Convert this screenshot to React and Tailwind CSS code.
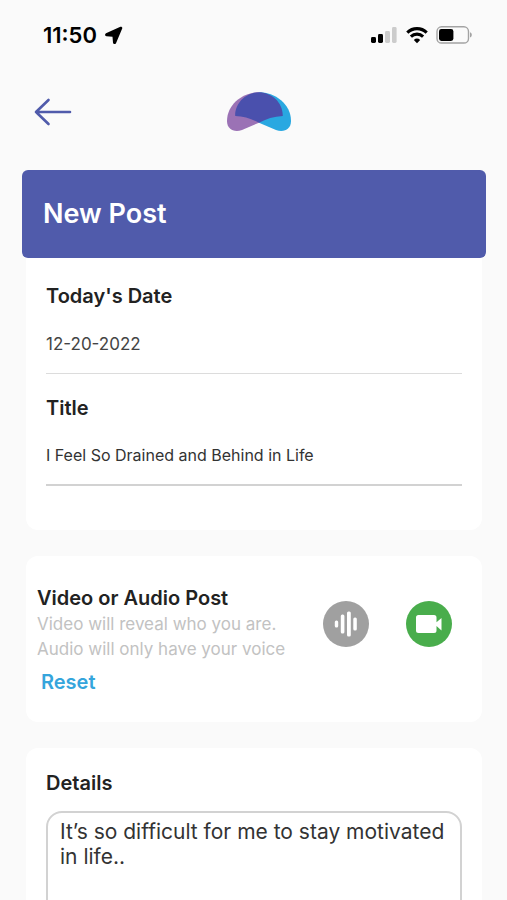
import { useState } from 'react';

const StatusBar = () => (
  <div className="flex h-[70px] items-center justify-between pl-[43px] pr-[34px] text-black">
    <div className="flex items-center gap-2">
      <span className="text-[22px] leading-7 font-semibold">11:50</span>
      <svg className="h-[18px] w-[18px]" viewBox="0 0 18 18" fill="currentColor" aria-hidden="true">
        <path d="M15.400.800 1 7.300c-1.400.7-1.200 2.900.5 3l6 .4.5 6c.1 1.600 2.300 1.900 3 .5L17.200 2.600c.5-1.200-.6-2.300-1.800-1.800z" />
      </svg>
    </div>
    <div className="flex items-center gap-2">
      <svg className="h-[18px] w-[27px]" viewBox="0 0 27 18" aria-hidden="true">
        <rect x="0" y="11" width="5" height="6" rx="1.4" fill="#000" />
        <rect x="7" y="8" width="5" height="9" rx="1.4" fill="#000" />
        <rect x="14" y="5" width="5" height="12" rx="1.4" fill="#ccc" />
        <rect x="21" y="1" width="4.6" height="16" rx="1.4" fill="#ccc" />
      </svg>
      <svg className="h-[18px] w-[22px]" viewBox="0 0 22 18" fill="none" stroke="#000" strokeWidth="3.1" aria-hidden="true">
        <path d="M1.3 6.6a13.8 13.8 0 0 1 19.4 0" />
        <path d="M4.9 10.6a8.8 8.8 0 0 1 12.2 0" />
        <path d="M11 17.2 7.8 13.9a4.7 4.7 0 0 1 6.4 0z" fill="#000" stroke="none" />
      </svg>
      <svg className="h-[18px] w-[37px]" viewBox="0 0 37 18" aria-hidden="true">
        <rect x="1" y=".8" width="31.5" height="16.2" rx="4.6" fill="none" stroke="#a3a3a3" strokeWidth="1.4" />
        <rect x="3" y="3" width="14.4" height="12" rx="2.4" fill="#000" />
        <path d="M34 6.3c2.4.8 2.4 4.4 0 5.2z" fill="#a3a3a3" />
      </svg>
    </div>
  </div>
);

const Logo = () => (
  <svg className="h-10 w-16" viewBox="0 0 64 40" role="img" aria-label="Logo">
    <path d="M32 .3C16 .3 0 12 0 29C0 37 7 41 15 38L32 30.700Z" fill="#9b72b5" />
    <path d="M32 .3C48 .3 64 12 64 29C64 37 57 41 49 38L32 30.700Z" fill="#29a8e1" />
    <path d="M32 .3C44 .3 56 10 55.800 24C47 24.300 39 27 32 30.700C25 27 17 24.300 8.200 24C8 10 20 .3 32 .3Z" fill="#4a50ad" />
  </svg>
);

const TopBar = () => (
  <header className="grid h-[100px] grid-cols-3 items-center px-[26px]">
    <button type="button" aria-label="Back" className="flex h-10 w-12 items-center justify-self-start pl-2 -mt-4">
      <svg className="h-7 w-[38px]" viewBox="0 0 38 28" fill="none" stroke="#505bab" strokeWidth="2.6" strokeLinecap="round" strokeLinejoin="round" aria-hidden="true">
        <path d="M36 14H2M14.500 2 2 14l12.500 12" />
      </svg>
    </button>
    <div className="-mt-4 justify-self-center pl-3">
      <Logo />
    </div>
  </header>
);

const labelClasses = 'block text-[20px] leading-7 font-semibold text-[#222]';

export default function App() {
  const [date, setDate] = useState('12-20-2022');
  const [title, setTitle] = useState('I Feel So Drained and Behind in Life');
  const [details, setDetails] = useState('It’s so difficult for me to stay motivated in life..');
  const [mode, setMode] = useState('video');

  const modeColor = (name) => (mode === name ? 'bg-[#49ad4c]' : 'bg-[#a0a0a0]');

  return (
    <div className="h-screen overflow-hidden bg-[#fafafa] font-['Inter',sans-serif]">
      <StatusBar />
      <TopBar />

      <main className="flex flex-col gap-[26px] pr-[25px] pl-[26px]">
        <div>
          {/* Title banner, slightly wider than the cards */}
          <div className="-mx-1 flex h-[88px] items-center rounded-md bg-[#505bab] px-[21px]">
            <h1 className="text-[27px] leading-9 font-semibold text-white">New Post</h1>
          </div>

          <section className="rounded-b-xl bg-white px-5 pt-6 pb-11">
            <label htmlFor="date" className={labelClasses}>Today's Date</label>
            <input
              id="date"
              value={date}
              onChange={(e) => setDate(e.target.value)}
              className="mt-1 block h-[60px] w-full border-b border-[#dcdcdc] text-[17px] text-[#444] outline-none"
            />
            <label htmlFor="title" className={`${labelClasses} mt-5`}>Title</label>
            <input
              id="title"
              value={title}
              onChange={(e) => setTitle(e.target.value)}
              className="mt-1 block h-[60px] w-full border-b-2 border-[#d2d2d2] text-[16px] text-[#333] outline-none"
            />
          </section>
        </div>

        <section className="flex items-start justify-between rounded-xl bg-white pt-7 pr-[30px] pb-6 pl-[11px]">
          <div>
            <h2 className={labelClasses}>Video or Audio Post</h2>
            <p className="text-[17px] leading-[25px] text-[#c2c2c2]">
              Video will reveal who you are.
              <br />
              Audio will only have your voice
            </p>
            <button
              type="button"
              onClick={() => setMode('video')}
              className="mt-1 ml-1 text-[20px] leading-8 font-semibold text-[#35a5dc]"
            >
              Reset
            </button>
          </div>

          <div className="flex shrink-0 gap-[37px] pt-[17px]">
            <button
              type="button"
              aria-label="Audio post"
              onClick={() => setMode('audio')}
              className={`flex size-[46px] items-center justify-center rounded-full ${modeColor('audio')}`}
            >
              <svg className="h-[26px] w-6" viewBox="0 0 24 26" fill="#fff" aria-hidden="true">
                <rect x=".8" y="9.500" width="3.400" height="7" rx="1.500" />
                <rect x="6.800" y="3.500" width="3.600" height="19" rx="1.500" />
                <rect x="13" y=".5" width="3.800" height="25" rx="1.500" />
                <rect x="19.300" y="6.500" width="3.500" height="13" rx="1.500" />
              </svg>
            </button>
            <button
              type="button"
              aria-label="Video post"
              onClick={() => setMode('video')}
              className={`flex size-[46px] items-center justify-center rounded-full ${modeColor('video')}`}
            >
              <svg className="h-[18px] w-[26px]" viewBox="0 0 26 18" fill="#fff" aria-hidden="true">
                <path d="M2.500 0h15.500a2.500 2.500 0 0 1 2.500 2.500V7.200L25.500 3v12.500L20.500 11V15.500a2.500 2.500 0 0 1-2.500 2.500H2.500a2.500 2.500 0 0 1-2.500-2.500v-13a2.500 2.500 0 0 1 2.500-2.500z" />
              </svg>
            </button>
          </div>
        </section>

        <section className="rounded-xl bg-white px-5 pt-[21px] pb-6">
          <label htmlFor="details" className={labelClasses}>Details</label>
          <textarea
            id="details"
            value={details}
            onChange={(e) => setDetails(e.target.value)}
            className="mt-[14px] block h-44 w-full resize-none rounded-2xl border-2 border-[#d2d2d2] px-3 py-[6px] text-[21px] leading-[25px] text-[#333] outline-none"
          />
        </section>
      </main>
    </div>
  );
}
